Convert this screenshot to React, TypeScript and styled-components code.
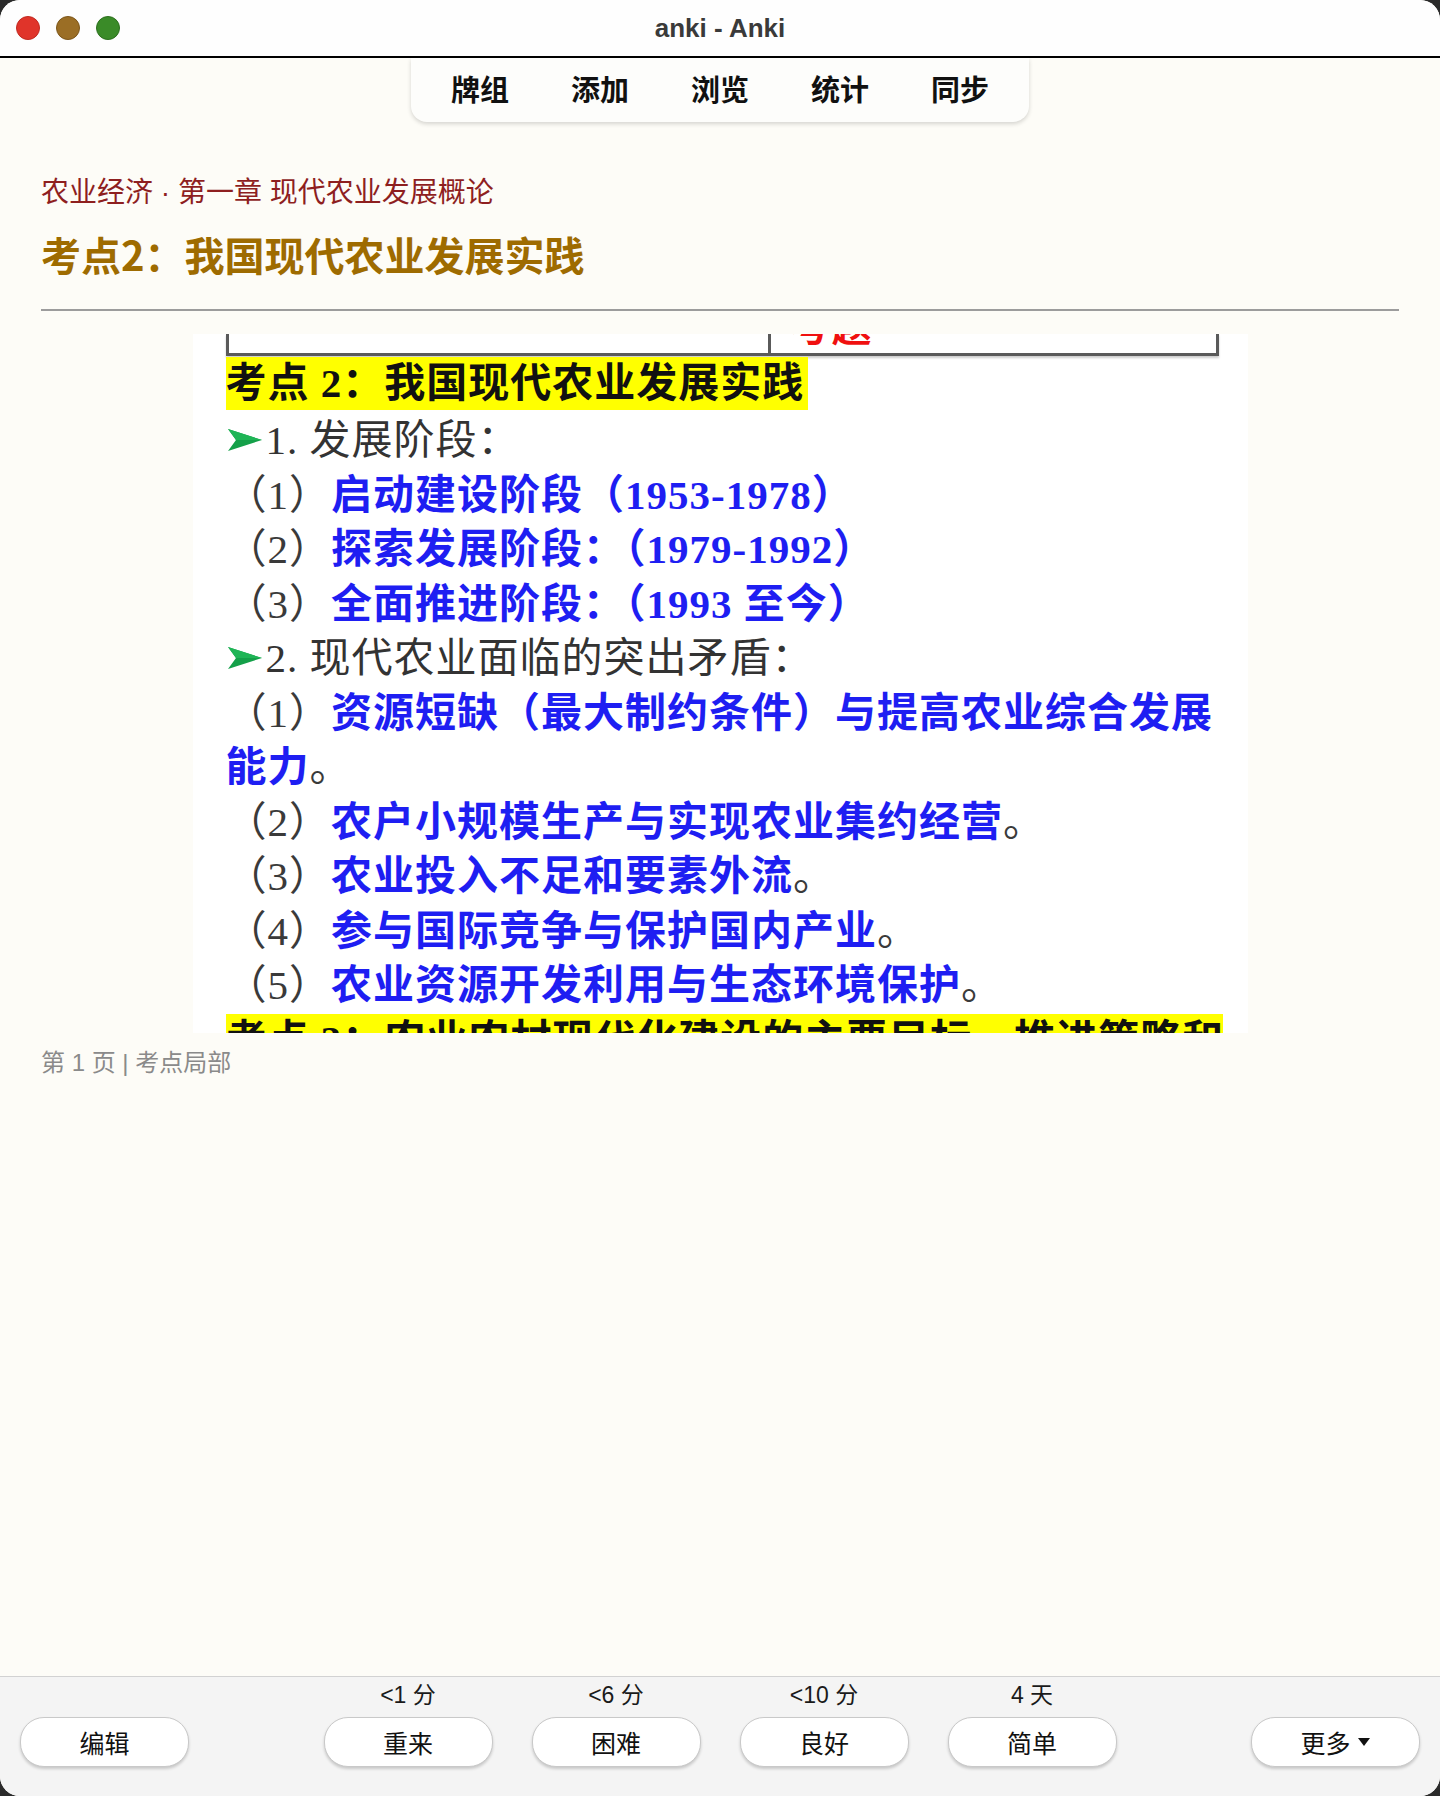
import * as React from "react";
import styled, { createGlobalStyle } from "styled-components";

const GlobalStyle = createGlobalStyle`
  html, body {
    margin: 0;
    padding: 0;
    background: #2b2b2b;
  }
  #root {
    width: 1440px;
    height: 1796px;
  }
`;

const UI_FONT = `"Liberation Sans", "Noto Sans CJK SC", sans-serif`;
const CJK_FONT = `"Noto Sans CJK SC", "Liberation Sans", sans-serif`;

const Window = styled.div`
  width: 1440px;
  height: 1796px;
  box-sizing: border-box;
  border-radius: 20px;
  overflow: hidden;
  background: #fdfcf7;
  display: flex;
  flex-direction: column;
  font-family: ${CJK_FONT};
`;

const TitleBar = styled.header`
  height: 56px;
  flex: none;
  background: #fefefe;
  border-bottom: 2px solid #000;
  display: grid;
  grid-template-columns: 1fr auto 1fr;
  align-items: center;
`;

const Lights = styled.div`
  display: flex;
  gap: 16px;
  padding-left: 16px;
`;

const Light = styled.span<{ $fill: string; $edge: string }>`
  width: 24px;
  height: 24px;
  box-sizing: border-box;
  border-radius: 50%;
  background: ${({ $fill }) => $fill};
  border: 1px solid ${({ $edge }) => $edge};
`;

const WindowTitle = styled.h1`
  margin: 0;
  font-family: ${UI_FONT};
  font-size: 26px;
  font-weight: 700;
  color: #3a3a3a;
`;

const Main = styled.main`
  flex: 1;
  display: flex;
  flex-direction: column;
  overflow: hidden;
`;

const NavWrap = styled.div`
  display: flex;
  justify-content: center;
`;

const Nav = styled.nav`
  display: flex;
  gap: 62px;
  align-items: center;
  height: 64px;
  box-sizing: border-box;
  padding: 0 40px 4px;
  background: #fdfdfb;
  border-radius: 0 0 16px 16px;
  box-shadow: 0 2px 4px rgba(0, 0, 0, 0.16);
`;

const NavItem = styled.a`
  font-size: 29px;
  font-weight: 700;
  color: #111;
  cursor: pointer;
`;

const Content = styled.section`
  padding: 51px 41px 0;
  display: flex;
  flex-direction: column;
`;

const Crumb = styled.div`
  font-family: ${UI_FONT};
  font-size: 28px;
  line-height: 40px;
  color: #8e1f1f;
`;

const Heading = styled.h2`
  margin: 13px 0 0;
  font-size: 40px;
  line-height: 56px;
  font-weight: 700;
  color: #9e6b00;
`;

const Rule = styled.hr`
  margin: 27px 0 23px;
  border: none;
  border-top: 2px solid #9c9c9c;
  height: 0;
`;

const Scan = styled.div`
  width: 1055px;
  height: 699px;
  margin: 0 auto;
  box-sizing: border-box;
  padding-left: 33px;
  background: #fff;
  overflow: hidden;
  font-family: "Liberation Serif", "Noto Sans CJK SC", serif;
  font-size: 41px;
  line-height: 54.5px;
  letter-spacing: 1px;
  white-space: nowrap;
`;

const TopTable = styled.div`
  display: grid;
  grid-template-columns: 542px 1fr;
  width: 993px;
  height: 22px;
  box-sizing: border-box;
  border: 3px solid #5a5a5a;
  border-top: none;
  box-shadow: 0 2px 2px rgba(0, 0, 0, 0.2);
  overflow: hidden;
`;

const Cell = styled.div`
  border-right: 3px solid #5a5a5a;
`;

const RedCut = styled.div`
  padding-left: 20px;
  margin-top: -30px;
  font-size: 40px;
  line-height: 48px;
  font-weight: 700;
  color: #f01010;
`;

const Mark = styled.div<{ $full?: boolean }>`
  width: ${({ $full }) => ($full ? "993px" : "fit-content")};
  margin: 1px 0 3px;
  padding-right: 4px;
  height: 53px;
  line-height: 53px;
  background: #ffff00;
  color: #111;
  font-weight: 700;
`;

const Line = styled.div`
  display: flex;
  align-items: center;
  height: 54.5px;
  color: #333;
`;

const Num = styled.span`
  color: #3a3a3a;
`;

const Blue = styled.span`
  color: #1e1ef2;
  font-weight: 700;
`;

const Caption = styled.div`
  margin-top: 15px;
  font-family: ${UI_FONT};
  font-size: 24px;
  line-height: 30px;
  color: #8a8a8a;
`;

const BottomBar = styled.footer`
  height: 120px;
  flex: none;
  box-sizing: border-box;
  border-top: 1px solid #d2d2d2;
  background: #f4f4f4;
  padding: 0 20px 29px;
  display: flex;
  align-items: flex-end;
  justify-content: space-between;
`;

const Answers = styled.div`
  display: flex;
  gap: 39px;
`;

const AnswerCol = styled.div`
  display: flex;
  flex-direction: column;
  align-items: center;
  gap: 9px;
`;

const Due = styled.span`
  font-family: ${UI_FONT};
  font-size: 23px;
  line-height: 26px;
  color: #1a1a1a;
`;

const Button = styled.button`
  width: 169px;
  height: 50px;
  border-radius: 24px;
  border: 1px solid #c9c9c9;
  background: #fff;
  box-shadow: 0 2px 3px rgba(0, 0, 0, 0.18);
  font-family: ${CJK_FONT};
  font-size: 25px;
  color: #111;
  display: flex;
  align-items: center;
  justify-content: center;
  gap: 6px;
  cursor: pointer;
`;

const Arrow = () => (
  <svg width="40" height="26" viewBox="0 0 40 26" style={{ flex: "none" }}>
    <polygon points="2,2 36,13 2,24 10,13" fill="#14a049" />
    <polygon points="2,2 36,13 10,13" fill="#1fb556" />
  </svg>
);

const Caret = () => (
  <svg width="14" height="10" viewBox="0 0 14 10">
    <polygon points="1,1 13,1 7,9" fill="#111" />
  </svg>
);

const stages = [
  ["（1）", "启动建设阶段（1953-1978）"],
  ["（2）", "探索发展阶段：（1979-1992）"],
  ["（3）", "全面推进阶段：（1993 至今）"],
];

const conflicts = [
  ["（2）", "农户小规模生产与实现农业集约经营"],
  ["（3）", "农业投入不足和要素外流"],
  ["（4）", "参与国际竞争与保护国内产业"],
  ["（5）", "农业资源开发利用与生态环境保护"],
];

const answers = [
  ["<1 分", "重来"],
  ["<6 分", "困难"],
  ["<10 分", "良好"],
  ["4 天", "简单"],
];

export default function App() {
  return (
    <>
      <GlobalStyle />
      <Window>
        <TitleBar>
          <Lights>
            <Light $fill="#e0342a" $edge="#c02a20" />
            <Light $fill="#9b6e25" $edge="#7c561a" />
            <Light $fill="#3a8b28" $edge="#2c6f1e" />
          </Lights>
          <WindowTitle>anki - Anki</WindowTitle>
          <div />
        </TitleBar>
        <Main>
          <NavWrap>
            <Nav>
              <NavItem>牌组</NavItem>
              <NavItem>添加</NavItem>
              <NavItem>浏览</NavItem>
              <NavItem>统计</NavItem>
              <NavItem>同步</NavItem>
            </Nav>
          </NavWrap>
          <Content>
            <Crumb>农业经济 · 第一章 现代农业发展概论</Crumb>
            <Heading>考点2：我国现代农业发展实践</Heading>
            <Rule />
            <Scan>
              <TopTable>
                <Cell />
                <RedCut>考题</RedCut>
              </TopTable>
              <Mark>考点 2：我国现代农业发展实践</Mark>
              <Line>
                <Arrow />
                1. 发展阶段：
              </Line>
              {stages.map(([n, t]) => (
                <Line key={n}>
                  <Num>{n}</Num>
                  <Blue>{t}</Blue>
                </Line>
              ))}
              <Line>
                <Arrow />
                2. 现代农业面临的突出矛盾：
              </Line>
              <Line>
                <Num>（1）</Num>
                <Blue>资源短缺（最大制约条件）与提高农业综合发展</Blue>
              </Line>
              <Line>
                <Blue>能力</Blue>
                <Num>。</Num>
              </Line>
              {conflicts.map(([n, t]) => (
                <Line key={n}>
                  <Num>{n}</Num>
                  <Blue>{t}</Blue>
                  <Num>。</Num>
                </Line>
              ))}
              <Mark $full>考点 3：农业农村现代化建设的主要目标、推进策略和</Mark>
            </Scan>
            <Caption>第 1 页 | 考点局部</Caption>
          </Content>
        </Main>
        <BottomBar>
          <Button>编辑</Button>
          <Answers>
            {answers.map(([due, label]) => (
              <AnswerCol key={label}>
                <Due>{due}</Due>
                <Button>{label}</Button>
              </AnswerCol>
            ))}
          </Answers>
          <Button>
            更多
            <Caret />
          </Button>
        </BottomBar>
      </Window>
    </>
  );
}
